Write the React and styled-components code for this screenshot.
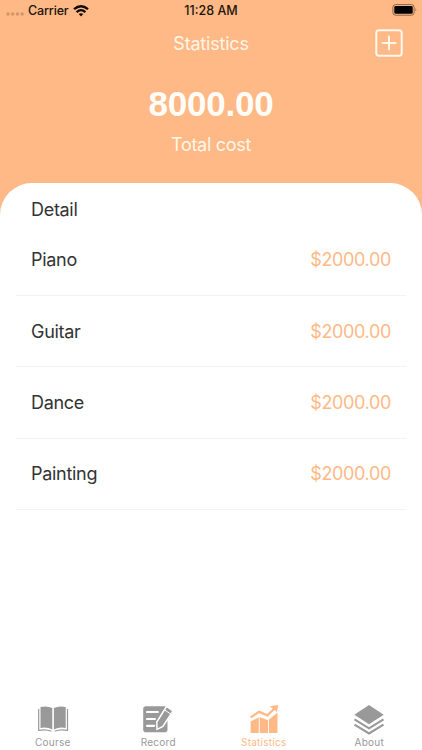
import React, { useState } from 'react';
import styled, { createGlobalStyle } from 'styled-components';

const GlobalStyle = createGlobalStyle`
    * {
        box-sizing: border-box;
    }

    body {
        margin: 0;
        font-family: Inter, "Liberation Sans", sans-serif;
    }
`;

const Screen = styled.div`
    display: flex;
    flex-direction: column;
    height: 750px;
    overflow: hidden;
    background-color: #ffb986;
`;

const StatusBar = styled.div`
    display: grid;
    grid-template-columns: 1fr auto 1fr;
    align-items: center;
    height: 21px;
    padding: 0 6px;
    color: #20140c;
`;

const StatusLeft = styled.div`
    display: flex;
    align-items: center;
`;

const StatusText = styled.span`
    font-size: 12.5px;
    font-weight: 500;
    line-height: 20px;
    letter-spacing: ${(props) => props.$spacing};
`;

const SignalIcon = styled.svg`
    margin: 7px 4px 0 0;
`;

const WifiIcon = styled.svg`
    margin-left: 4px;
`;

const BatteryIcon = styled.svg`
    justify-self: end;
    margin: 0 -2px 1px 0;
`;

const NavBar = styled.header`
    display: grid;
    grid-template-columns: 1fr auto 1fr;
    align-items: center;
    height: 45px;
    padding: 0 19px;
`;

const Title = styled.h1`
    grid-column: 2;
    margin: 0;
    color: #fff6e6;
    font-size: 18px;
    font-weight: 400;
    line-height: 24px;
    letter-spacing: -0.2px;
`;

const AddButton = styled.button`
    display: flex;
    justify-self: end;
    margin-bottom: 1px;
    padding: 0;
    border: none;
    background: none;
    cursor: pointer;
`;

const Summary = styled.section`
    display: flex;
    flex-direction: column;
    align-items: center;
    height: 117.4px;
    padding-top: 18px;
`;

const Total = styled.div`
    color: #fffdf8;
    font-family: "Liberation Sans", sans-serif;
    font-size: 35px;
    font-weight: 700;
    line-height: 40px;
    letter-spacing: -0.2px;
`;

const TotalLabel = styled.div`
    margin-top: 9px;
    color: #fff6e6;
    font-size: 18px;
    line-height: 24px;
    letter-spacing: -0.3px;
`;

const Sheet = styled.main`
    display: flex;
    flex: 1;
    flex-direction: column;
    border-radius: 32px 32px 0 0;
    background-color: #fff;
`;

const SheetTitle = styled.h2`
    margin: 0;
    padding: 15px 31px 0;
    color: #333;
    font-size: 18px;
    font-weight: 400;
    line-height: 24px;
    letter-spacing: -0.3px;
`;

const CourseList = styled.ul`
    flex: 1;
    margin: 0;
    padding: 2.4px 16px 0;
    list-style: none;
`;

const CourseRow = styled.li`
    display: flex;
    align-items: center;
    justify-content: space-between;
    height: 71.25px;
    padding: 0 15px;
    border-bottom: 1px solid #f3f3f3;
    color: #333;
    font-size: 18px;
    letter-spacing: -0.3px;
`;

const Price = styled.span`
    color: #ffb986;
    letter-spacing: -0.35px;
`;

const TabBar = styled.nav`
    display: grid;
    grid-template-columns: repeat(4, 1fr);
    height: 49px;
`;

const Tab = styled.button`
    display: flex;
    flex-direction: column;
    align-items: center;
    padding: 2px 0 0;
    border: none;
    background: none;
    color: ${(props) => (props.$active ? '#ffb986' : '#999')};
    font-family: inherit;
    font-size: 10px;
    line-height: 14px;
    letter-spacing: 0.25px;
    cursor: pointer;
`;

const BookIcon = () => (
    <svg width="32" height="32" viewBox="0 0 32 32" fill="currentColor">
        <path d="M3.5 4 Q10 2.5 15.3 5 V26.6 Q10 23.6 3.5 24.9Z" />
        <path d="M28.7 4 Q22 2.5 16.9 5 V26.6 Q22 23.6 28.7 24.9Z" />
        <path d="M1.7 6 V27.3 Q9 25.9 14.5 28.3 M30.5 6 V27.3 Q23 25.9 17.7 28.3" fill="none" stroke="currentColor" strokeWidth="1.2" />
    </svg>
);

const RecordIcon = () => (
    <svg width="32" height="32" viewBox="0 0 32 32">
        <rect x="1.2" y="3.2" width="24.3" height="26" rx="2.8" fill="currentColor" />
        <path d="M5 9H15.8 M5 16H13 M5 22.8H12.2" stroke="#fff" strokeWidth="2.2" strokeLinecap="round" />
        <path d="M24.6 3.4 L31 7.8 L20.9 23.4 L15 26.4 L14.8 19Z" fill="currentColor" stroke="#fff" strokeWidth="1.5" />
        <path d="M22.4 6.8 L28.8 11.1" stroke="#fff" strokeWidth="1" />
    </svg>
);

const StatisticsIcon = () => (
    <svg width="32" height="32" viewBox="0 0 32 32" fill="currentColor">
        <path d="M2.6 18.4 L10.8 14.2 V30 H2.6Z M11.7 13.9 L20 17.2 V30 H11.7Z M20.9 16.6 L29.5 9.8 V30 H20.9Z" />
        <path d="M2.5 14.4 L11 8.9 L19.4 12.3 L27 5" fill="none" stroke="currentColor" strokeWidth="2.3" />
        <path d="M21.8 3.3 L30.2 2 L29 9Z" />
    </svg>
);

const LayersIcon = () => (
    <svg width="32" height="32" viewBox="0 0 32 32">
        <path d="M16 2 L30.7 11.8 L16 21.3 L1.3 11.8Z" fill="currentColor" />
        <path d="M1.5 16.4 L16 25.3 L30.5 16.4 M1.5 21.7 L16 30.5 L30.5 21.7" fill="none" stroke="currentColor" strokeWidth="2.1" />
    </svg>
);

const courses = [
    { name: 'Piano', cost: 2000 },
    { name: 'Guitar', cost: 2000 },
    { name: 'Dance', cost: 2000 },
    { name: 'Painting', cost: 2000 },
];

const tabs = [
    { label: 'Course', Icon: BookIcon },
    { label: 'Record', Icon: RecordIcon },
    { label: 'Statistics', Icon: StatisticsIcon },
    { label: 'About', Icon: LayersIcon },
];

const App = () => {
    const [activeTab, setActiveTab] = useState('Statistics');
    const total = courses.reduce((sum, course) => sum + course.cost, 0);

    return (
        <>
            <GlobalStyle />
            <Screen>
                <StatusBar>
                    <StatusLeft>
                        <SignalIcon width="18" height="4" viewBox="0 0 18 4" fill="#d2946a">
                            <circle cx="2" cy="2" r="1.7" />
                            <circle cx="6.7" cy="2" r="1.7" />
                            <circle cx="11.4" cy="2" r="1.7" />
                            <circle cx="16.1" cy="2" r="1.7" />
                        </SignalIcon>
                        <StatusText $spacing="-0.15px">Carrier</StatusText>
                        <WifiIcon width="16" height="12" viewBox="0 0 16 12" fill="none" stroke="#100a06" strokeWidth="2.3">
                            <path d="M1 4.2 Q8 -1.8 15 4.2" />
                            <path d="M3.6 7.1 Q8 3.2 12.4 7.1" />
                            <path d="M8 11.5 L5.7 9.1 Q8 7.3 10.3 9.1Z" fill="#100a06" stroke="none" />
                        </WifiIcon>
                    </StatusLeft>
                    <StatusText $spacing="0">11:28 AM</StatusText>
                    <BatteryIcon width="26" height="12" viewBox="0 0 26 12">
                        <rect x="0.9" y="0.6" width="21.2" height="10.6" rx="2.7" fill="none" stroke="#8a6448" strokeWidth="1" />
                        <rect x="2.3" y="2" width="18.4" height="7.8" rx="1.4" fill="#000" />
                        <path d="M23.5 4.1 Q25.3 5.9 23.5 7.7Z" fill="#8a6448" />
                    </BatteryIcon>
                </StatusBar>
                <NavBar>
                    <Title>Statistics</Title>
                    <AddButton aria-label="Add">
                        <svg width="28" height="28" viewBox="0 0 28 28" fill="none" stroke="#fff8ec" strokeWidth="2">
                            <rect x="1.3" y="1.3" width="25.4" height="25.4" rx="2.8" />
                            <path d="M14 7.5V20.5M7.5 14H20.5" strokeLinecap="round" />
                        </svg>
                    </AddButton>
                </NavBar>
                <Summary>
                    <Total>{total.toFixed(2)}</Total>
                    <TotalLabel>Total cost</TotalLabel>
                </Summary>
                <Sheet>
                    <SheetTitle>Detail</SheetTitle>
                    <CourseList>
                        {courses.map((course) => (
                            <CourseRow key={course.name}>
                                <span>{course.name}</span>
                                <Price>{`$${course.cost.toFixed(2)}`}</Price>
                            </CourseRow>
                        ))}
                    </CourseList>
                    <TabBar>
                        {tabs.map(({ label, Icon }) => (
                            <Tab key={label} $active={activeTab === label} onClick={() => setActiveTab(label)}>
                                <Icon />
                                {label}
                            </Tab>
                        ))}
                    </TabBar>
                </Sheet>
            </Screen>
        </>
    );
};

export default App;
